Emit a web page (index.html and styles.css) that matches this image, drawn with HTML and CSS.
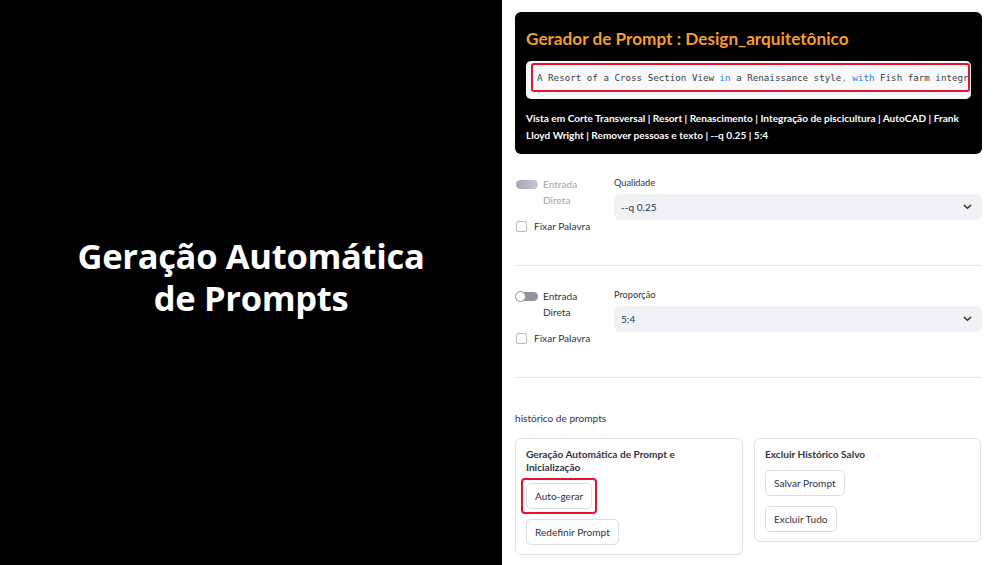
FILE: index.html
```html
<!DOCTYPE html>
<html lang="pt">
<head>
<meta charset="utf-8">
<link rel="stylesheet" href="styles.css">
</head>
<body>
<div class="page">
  <section class="hero">
    <h1 class="hero-title">Geração Automática<br>de Prompts</h1>
  </section>
  <main class="app">
    <div class="prompt-card">
      <h2 class="prompt-title">Gerador de Prompt : Design_arquitetônico</h2>
      <div class="code-box">
        <div class="code-line">A Resort of a Cross Section View <span class="kw">in</span> a Renaissance style<span class="punct">,</span> <span class="kw">with</span> Fish farm integr</div>
      </div>
      <p class="prompt-desc">Vista em Corte Transversal | Resort | Renascimento | Integração de piscicultura | AutoCAD | Frank Lloyd Wright | Remover pessoas e texto | --q 0.25 | 5:4</p>
    </div>

    <div class="option-row">
      <div class="option-left">
        <div class="toggle-row disabled">
          <span class="toggle toggle-disabled"></span>
          <span class="toggle-label">Entrada<br>Direta</span>
        </div>
        <div class="check-row">
          <span class="checkbox"></span>
          <span class="check-label">Fixar Palavra</span>
        </div>
      </div>
      <div class="option-right">
        <div class="field-label">Qualidade</div>
        <div class="select">
          <span>--q 0.25</span>
          <svg class="chevron" viewBox="0 0 10 6" width="9" height="6"><path d="M1.5 1.2l3.5 3.3 3.5-3.3" fill="none" stroke="#31333f" stroke-width="1.6" stroke-linecap="round" stroke-linejoin="round"/></svg>
        </div>
      </div>
    </div>
    <hr class="divider">

    <div class="option-row">
      <div class="option-left">
        <div class="toggle-row">
          <span class="toggle"><span class="knob"></span></span>
          <span class="toggle-label">Entrada<br>Direta</span>
        </div>
        <div class="check-row">
          <span class="checkbox"></span>
          <span class="check-label">Fixar Palavra</span>
        </div>
      </div>
      <div class="option-right">
        <div class="field-label">Proporção</div>
        <div class="select">
          <span>5:4</span>
          <svg class="chevron" viewBox="0 0 10 6" width="9" height="6"><path d="M1.5 1.2l3.5 3.3 3.5-3.3" fill="none" stroke="#31333f" stroke-width="1.6" stroke-linecap="round" stroke-linejoin="round"/></svg>
        </div>
      </div>
    </div>
    <hr class="divider">

    <div class="history-label">histórico de prompts</div>
    <div class="history-grid">
      <div class="panel panel-left">
        <div class="panel-title narrow">Geração Automática de Prompt e Inicialização</div>
        <span class="mark"><button class="btn">Auto-gerar</button></span>
        <button class="btn">Redefinir Prompt</button>
      </div>
      <div class="panel">
        <div class="panel-title">Excluir Histórico Salvo</div>
        <button class="btn">Salvar Prompt</button>
        <button class="btn">Excluir Tudo</button>
      </div>
    </div>
  </main>
</div>
</body>
</html>
```
FILE: styles.css
```css
* { box-sizing: border-box; }
html, body { margin: 0; padding: 0; }
body {
  width: 1005px;
  height: 565px;
  overflow: hidden;
  font-family: Lato, "Noto Sans", sans-serif;
  color: #31333f;
}
.page {
  display: flex;
  height: 565px;
}
.hero {
  width: 502px;
  flex: none;
  background: #000;
  display: flex;
  align-items: center;
  justify-content: center;
  padding-bottom: 12px;
}
.hero-title {
  margin: 0;
  color: #fff;
  font-family: "Open Sans", sans-serif;
  font-weight: 700;
  font-size: 34.5px;
  line-height: 42px;
  text-align: center;
  letter-spacing: -0.3px;
}
.app {
  flex: 1;
  min-width: 0;
  background: #fff;
  padding: 12px 23px 0 13px;
  display: flex;
  flex-direction: column;
}
.prompt-card {
  background: #000;
  border-radius: 6px;
  padding: 14px 11px 10px 11px;
  height: 142px;
  min-width: 0;
}
.prompt-title {
  margin: 0;
  color: #f59e2b;
  font-size: 17.2px;
  line-height: 26px;
  font-weight: 700;
}
.code-box {
  margin-top: 9px;
  height: 38px;
  background: #f8f9fb;
  border-radius: 5px;
  padding: 2px 1px 7px 5px;
}
.code-line {
  height: 29px;
  border: 2px solid #e8112d;
  border-radius: 3px;
  padding-left: 4px;
  font-family: "DejaVu Sans Mono", "Liberation Mono", monospace;
  font-size: 9.2px;
  line-height: 25px;
  white-space: nowrap;
  overflow: hidden;
  color: #3b3d48;
}
.kw { color: #1c83e1; }
.punct { color: #8a8d96; }
.prompt-desc {
  margin: 11px 0 0;
  color: #fff;
  font-size: 10.1px;
  line-height: 17px;
  font-weight: 700;
}
.option-row {
  display: flex;
  margin-top: 22px;
}
.option-left {
  width: 99px;
  flex: none;
}
.toggle-row {
  display: flex;
  align-items: flex-start;
  font-size: 10.1px;
  line-height: 16px;
}
.toggle-row.disabled { color: #a3a6ad; }
.toggle {
  width: 22px;
  height: 9px;
  border-radius: 5px;
  background: #8f939b;
  margin: 4px 5px 0 1px;
  position: relative;
  flex: none;
}
.toggle-disabled {
  background: linear-gradient(90deg, #a4a9b4, #c3c6cc);
}
.knob {
  position: absolute;
  left: -1px;
  top: -1px;
  width: 11px;
  height: 11px;
  border-radius: 50%;
  background: #fff;
  border: 1px solid #8f939b;
}
.check-row {
  display: flex;
  align-items: center;
  margin-top: 10px;
  font-size: 10.1px;
  line-height: 16px;
}
.checkbox {
  width: 11px;
  height: 11px;
  border: 1px solid #b8bbc2;
  border-radius: 2px;
  margin: 0 7px 0 1px;
  background: #fff;
}
.option-right { flex: 1; min-width: 0; }
.field-label {
  font-size: 9.2px;
  line-height: 14px;
}
.select {
  margin-top: 4px;
  height: 26px;
  background: #f0f2f6;
  border-radius: 6px;
  display: flex;
  align-items: center;
  justify-content: space-between;
  padding: 0 10px 0 7px;
  font-size: 10.1px;
}
.chevron { display: block; }
.divider {
  margin: 31px 0 0;
  border: 0;
  border-top: 1px solid #e6e7ea;
  height: 0;
}
.history-label {
  margin-top: 33px;
  font-size: 10.1px;
  line-height: 14px;
}
.history-grid {
  margin-top: 13px;
  display: grid;
  grid-template-columns: 228px 227px;
  gap: 11px;
  align-items: start;
}
.panel {
  border: 1px solid #dfe1e5;
  border-radius: 6px;
  padding: 9px 10px 9px 10px;
  display: flex;
  flex-direction: column;
  align-items: flex-start;
  gap: 10px;
}
.panel-title {
  font-size: 10.1px;
  line-height: 13px;
  font-weight: 700;
  margin-bottom: -1px;
}
.panel-title.narrow { max-width: 180px; }
.mark {
  display: block;
  border: 2px solid #e8112d;
  border-radius: 4px;
  padding: 3px;
  margin: -5px 0 -5px -5px;
}
.btn {
  display: block;
  font-family: inherit;
  font-size: 10.1px;
  color: #31333f;
  background: #fff;
  border: 1px solid #dcdee3;
  border-radius: 5px;
  height: 26px;
  padding: 0 8px;
  cursor: pointer;
}
```
